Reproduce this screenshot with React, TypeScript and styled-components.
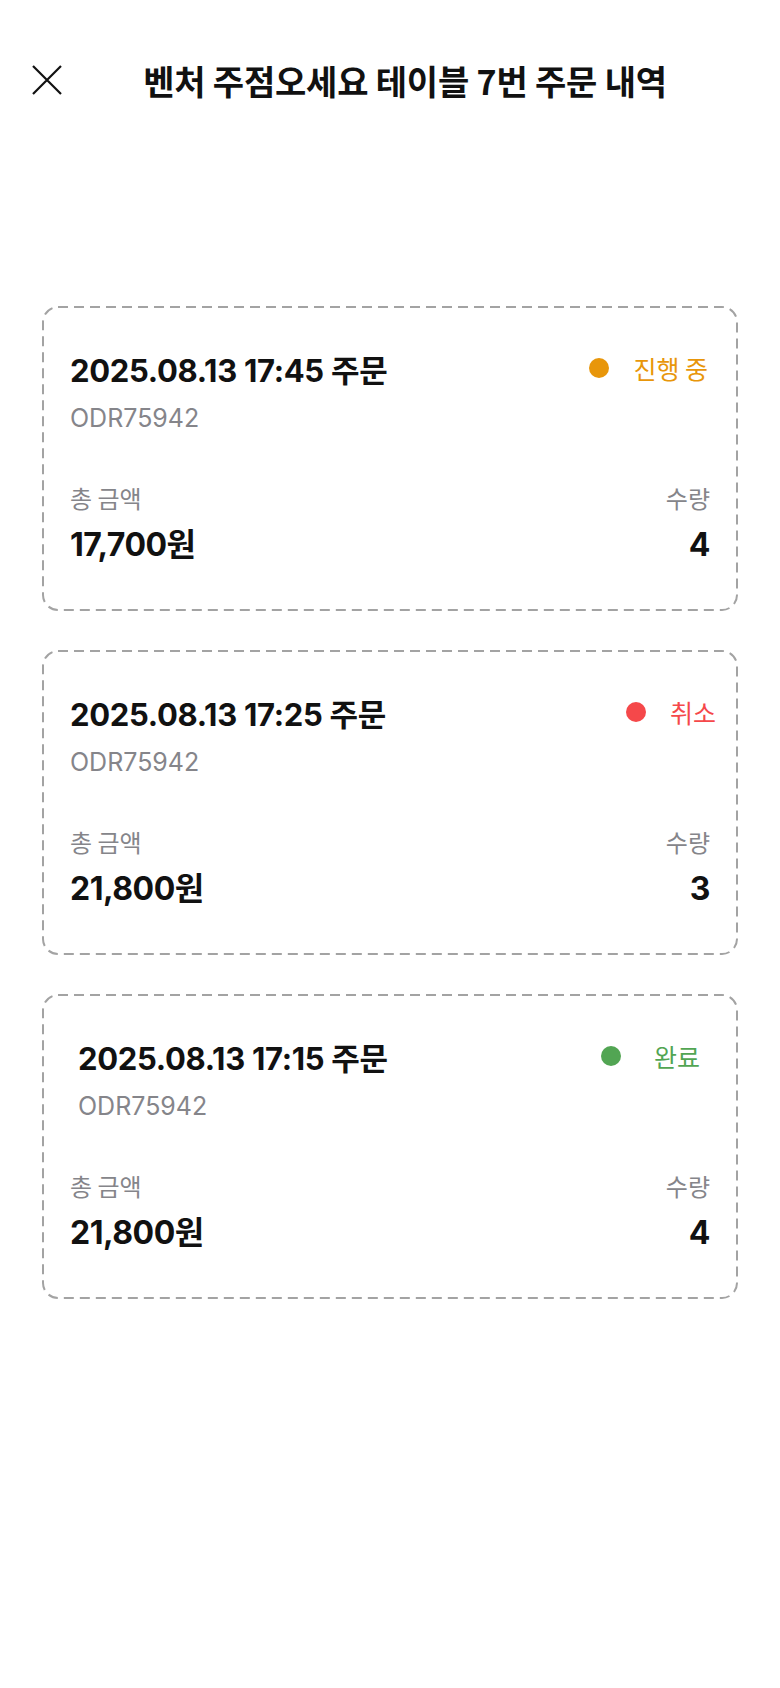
import React from "react";
import styled, { createGlobalStyle } from "styled-components";

const GlobalStyle = createGlobalStyle`
  html, body {
    margin: 0;
    padding: 0;
    background: #ffffff;
  }
  body {
    font-family: "Inter", "Noto Sans CJK KR", sans-serif;
    color: #111111;
    -webkit-font-smoothing: antialiased;
  }
`;

type Status = "progress" | "cancel" | "done";

const statusColor: Record<Status, string> = {
  progress: "#e8960a",
  cancel: "#f5484a",
  done: "#52a553",
};

const statusLabel: Record<Status, string> = {
  progress: "진행 중",
  cancel: "취소",
  done: "완료",
};

interface Order {
  id: string;
  time: string;
  status: Status;
  total: string;
  count: number;
  // 헤더 영역이 카드마다 살짝 어긋나 있음
  insetLeft: number;
  insetRight: number;
  dotGap: number;
}

const orders: Order[] = [
  { id: "ODR75942", time: "2025.08.13 17:45", status: "progress", total: "17,700원", count: 4, insetLeft: 0, insetRight: 2, dotGap: 24 },
  { id: "ODR75942", time: "2025.08.13 17:25", status: "cancel", total: "21,800원", count: 3, insetLeft: 0, insetRight: -6, dotGap: 24 },
  { id: "ODR75942", time: "2025.08.13 17:15", status: "done", total: "21,800원", count: 4, insetLeft: 8, insetRight: 10, dotGap: 33 },
];

const Page = styled.div`
  width: 780px;
  min-height: 1688px;
  background: #ffffff;
`;

const TopBar = styled.header`
  display: flex;
  align-items: center;
  height: 60px;
  padding: 50px 32px 0 32px;
`;

const CloseButton = styled.button`
  display: flex;
  align-items: center;
  justify-content: center;
  width: 30px;
  height: 30px;
  padding: 0;
  border: none;
  background: none;
  cursor: pointer;
`;

const Title = styled.h1`
  flex: 1;
  margin: 0;
  text-align: center;
  font-family: "Noto Sans CJK KR", sans-serif;
  font-size: 34px;
  font-weight: 700;
  letter-spacing: -0.2px;
  color: #111111;
`;

const OrderList = styled.main`
  display: flex;
  flex-direction: column;
  gap: 39px;
  padding: 196px 42px 0 42px;
`;

const Card = styled.section`
  position: relative;
  box-sizing: border-box;
  height: 305px;
  padding: 44px 28px 0 28px;
  border-radius: 16px;
`;

const DashedEdge = styled.svg`
  position: absolute;
  inset: 0;
  width: 100%;
  height: 100%;
  overflow: visible;
  pointer-events: none;
`;

const HeaderRow = styled.div<{ $left: number; $right: number }>`
  display: flex;
  align-items: center;
  justify-content: space-between;
  height: 36px;
  margin: 0 ${(p) => p.$right}px 0 ${(p) => p.$left}px;
`;

const OrderTime = styled.div`
  font-size: 31px;
  font-weight: 700;
  letter-spacing: -0.3px;
  color: #111111;
`;

const StatusBadge = styled.div<{ $color: string; $gap: number }>`
  display: flex;
  align-items: center;
  gap: ${(p) => p.$gap}px;
  font-family: "Noto Sans CJK KR", sans-serif;
  font-size: 25px;
  color: ${(p) => p.$color};
`;

const Dot = styled.span<{ $color: string }>`
  width: 20px;
  height: 20px;
  border-radius: 50%;
  background: ${(p) => p.$color};
`;

const OrderCode = styled.div<{ $left: number }>`
  margin: 17px 0 0 ${(p) => p.$left}px;
  height: 30px;
  line-height: 30px;
  font-size: 25px;
  color: #85858a;
`;

const SummaryRow = styled.div`
  display: flex;
  justify-content: space-between;
  margin-top: 50px;
`;

const SummaryItem = styled.div<{ $align: "left" | "right" }>`
  display: flex;
  flex-direction: column;
  gap: 14px;
  align-items: ${(p) => (p.$align === "left" ? "flex-start" : "flex-end")};
`;

const Label = styled.span`
  height: 30px;
  line-height: 30px;
  font-family: "Noto Sans CJK KR", sans-serif;
  font-size: 24px;
  color: #85858a;
`;

const Value = styled.span`
  height: 36px;
  line-height: 36px;
  font-size: 32px;
  font-weight: 700;
  letter-spacing: -0.5px;
  color: #111111;
`;

const CloseIcon = () => (
  <svg width="30" height="30" viewBox="0 0 30 30">
    <path d="M1 1 L29 29 M29 1 L1 29" stroke="#111111" strokeWidth="2.2" fill="none" />
  </svg>
);

const OrderCard: React.FC<{ order: Order }> = ({ order }) => {
  const color = statusColor[order.status];
  return (
    <Card>
      <DashedEdge>
        <rect
          x="1"
          y="1"
          width="calc(100% - 2px)"
          height="calc(100% - 2px)"
          rx="15"
          fill="none"
          stroke="#a3a3a3"
          strokeWidth="2"
          strokeDasharray="10 6"
        />
      </DashedEdge>
      <HeaderRow $left={order.insetLeft} $right={order.insetRight}>
        <OrderTime>{order.time} 주문</OrderTime>
        <StatusBadge $color={color} $gap={order.dotGap}>
          <Dot $color={color} />
          {statusLabel[order.status]}
        </StatusBadge>
      </HeaderRow>
      <OrderCode $left={order.insetLeft}>{order.id}</OrderCode>
      <SummaryRow>
        <SummaryItem $align="left">
          <Label>총 금액</Label>
          <Value>{order.total}</Value>
        </SummaryItem>
        <SummaryItem $align="right">
          <Label>수량</Label>
          <Value>{order.count}</Value>
        </SummaryItem>
      </SummaryRow>
    </Card>
  );
};

const App: React.FC = () => {
  return (
    <Page>
      <GlobalStyle />
      <TopBar>
        <CloseButton aria-label="닫기">
          <CloseIcon />
        </CloseButton>
        <Title>벤처 주점오세요 테이블 7번 주문 내역</Title>
      </TopBar>
      <OrderList>
        {orders.map((order, i) => (
          <OrderCard key={i} order={order} />
        ))}
      </OrderList>
    </Page>
  );
};

export default App;
